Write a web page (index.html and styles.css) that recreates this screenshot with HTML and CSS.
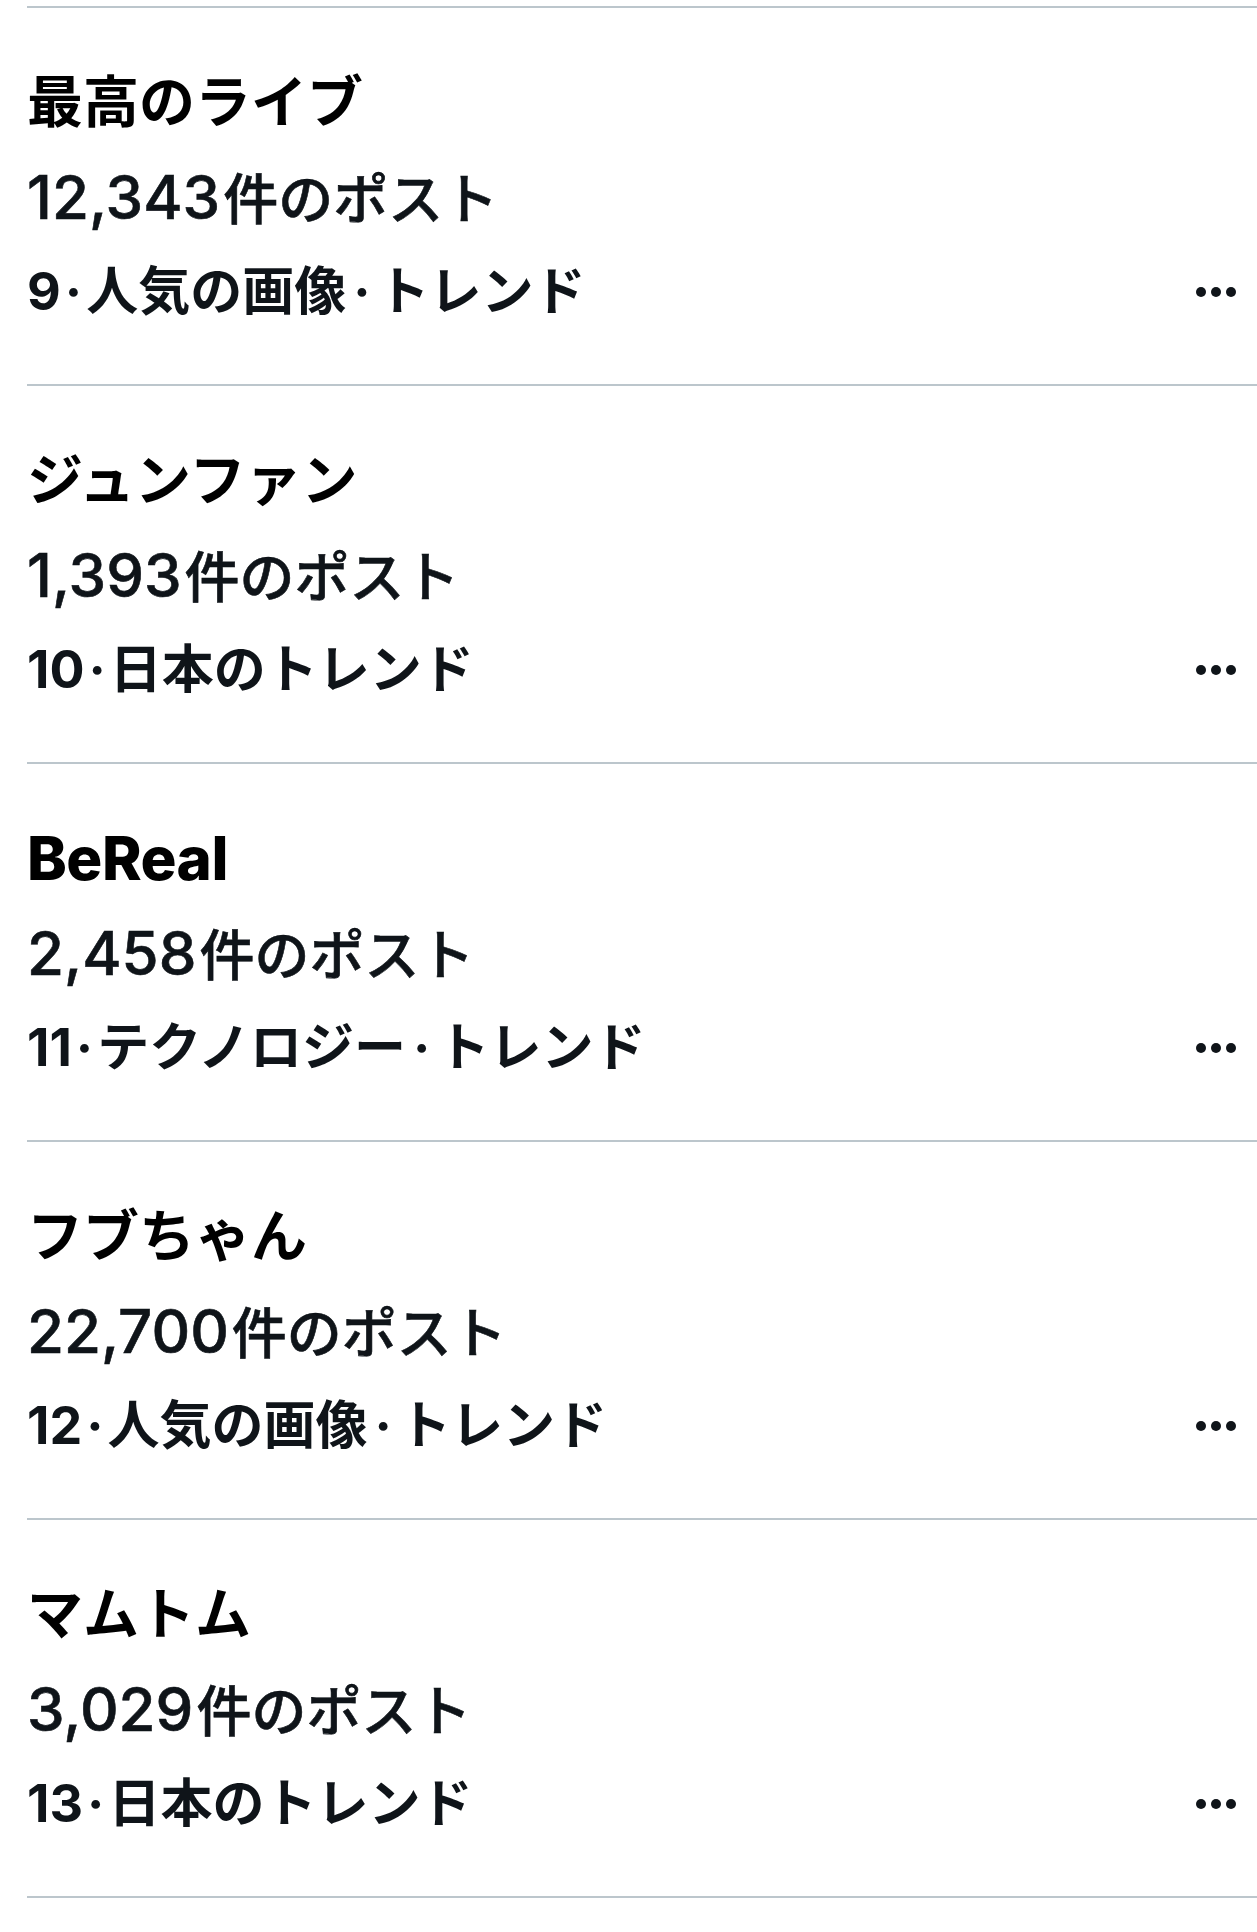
FILE: index.html
```html
<!DOCTYPE html>
<html lang="ja">
<head>
<meta charset="utf-8">
<title>トレンド</title>
<link rel="stylesheet" href="styles.css">
</head>
<body>
<div class="trends">
  <div class="trend">
    <div class="title">最高のライブ</div>
    <div class="count"><span class="num">12,343</span>件のポスト</div>
    <div class="meta-row">
      <div class="meta">9<span class="sep">·</span>人気の画像<span class="sep wide">·</span>トレンド</div>
      <div class="more"><span></span><span></span><span></span></div>
    </div>
  </div>
  <div class="trend">
    <div class="title">ジュンファン</div>
    <div class="count"><span class="num">1,393</span>件のポスト</div>
    <div class="meta-row">
      <div class="meta">10<span class="sep">·</span>日本のトレンド</div>
      <div class="more"><span></span><span></span><span></span></div>
    </div>
  </div>
  <div class="trend">
    <div class="title latin">BeReal</div>
    <div class="count"><span class="num">2,458</span>件のポスト</div>
    <div class="meta-row">
      <div class="meta">11<span class="sep">·</span>テクノロジー<span class="sep wide">·</span>トレンド</div>
      <div class="more"><span></span><span></span><span></span></div>
    </div>
  </div>
  <div class="trend">
    <div class="title">フブちゃん</div>
    <div class="count"><span class="num">22,700</span>件のポスト</div>
    <div class="meta-row">
      <div class="meta">12<span class="sep">·</span>人気の画像<span class="sep wide">·</span>トレンド</div>
      <div class="more"><span></span><span></span><span></span></div>
    </div>
  </div>
  <div class="trend">
    <div class="title">マムトム</div>
    <div class="count"><span class="num">3,029</span>件のポスト</div>
    <div class="meta-row">
      <div class="meta">13<span class="sep">·</span>日本のトレンド</div>
      <div class="more"><span></span><span></span><span></span></div>
    </div>
  </div>
</div>
</body>
</html>
```
FILE: styles.css
```css
html, body {
  margin: 0;
  padding: 0;
  background: #ffffff;
}

body {
  font-family: "Inter", "Noto Sans CJK JP", sans-serif;
  color: #0f1419;
}

.trends {
  padding-top: 6px;
}

.trends > .trend:first-child {
  border-top: 2px solid #bcc6cc;
}

.trend {
  margin-left: 27px;
  padding-top: 46px;
  padding-bottom: 45px;
  padding-right: 21px;
  border-bottom: 2px solid #bcc6cc;
  display: flex;
  flex-direction: column;
}

.title {
  font-size: 56px;
  font-weight: 700;
  color: #000000;
  line-height: 96px;
  height: 96px;
}

.title.latin {
  font-size: 60px;
  font-weight: 800;
  letter-spacing: -0.5px;
}

.count {
  font-size: 55px;
  font-weight: 500;
  line-height: 94px;
  height: 94px;
  -webkit-text-stroke: 0.6px #0f1419;
}

.count .num {
  font-size: 60px;
  font-weight: 500;
  margin-right: 3px;
}

.meta-row {
  display: flex;
  align-items: center;
  justify-content: space-between;
  height: 95px;
}

.meta {
  font-size: 52px;
  font-weight: 700;
  line-height: 95px;
}

.sep {
  display: inline-block;
  margin: 0 4px;
}

.sep.wide {
  margin: 0 7px;
}

.more {
  display: flex;
  gap: 5px;
  align-items: center;
}

.more span {
  width: 10px;
  height: 10px;
  border-radius: 50%;
  background: #0f1419;
}
```
